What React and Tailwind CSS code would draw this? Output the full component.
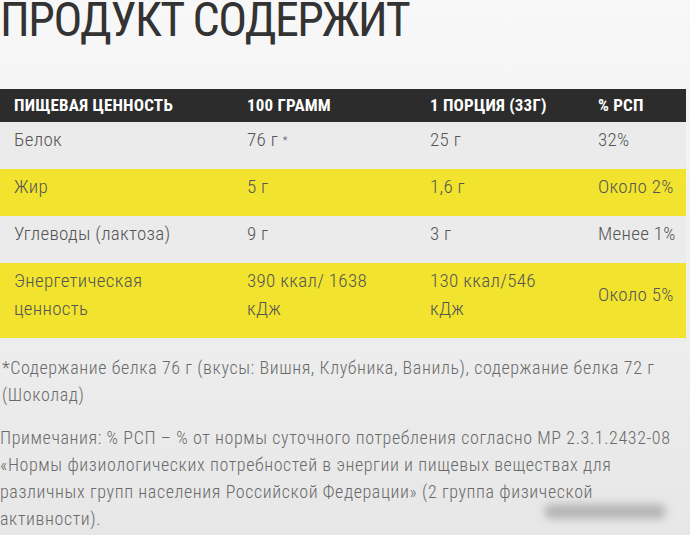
import React from "react";

const rows = [
  { bg: "bg-[#ebebeb]", c: ["Белок", <>76 г <sup className="text-[11px] relative -top-[2px]">*</sup></>, "25 г", "32%"] },
  { bg: "bg-[#f2e42e]", c: ["Жир", "5 г", "1,6 г", "Около 2%"] },
  { bg: "bg-[#ebebeb]", c: ["Углеводы (лактоза)", "9 г", "3 г", "Менее 1%"] },
  {
    bg: "bg-[#f2e42e]",
    c: [
      <>Энергетическая<br />ценность</>,
      <>390 ккал/ 1638<br />кДж</>,
      <>130 ккал/546<br />кДж</>,
      "Около 5%",
    ],
  },
];

export default function App() {
  return (
    <div className="relative w-[690px] h-[535px] overflow-hidden bg-gradient-to-b from-[#f8f8f8] to-[#e7e7e7] font-['Roboto',sans-serif] [font-stretch:75%]">
      <div className="h-[89px] flex flex-col">
        <h1 className="text-[48px] leading-[40px] text-[#333333] font-normal uppercase [font-stretch:75%] tracking-[-1.5px]">
          Продукт содержит
        </h1>
      </div>

      <div className="w-[686px]">
        <div className="grid grid-cols-[233px_183px_168px_1fr] pl-[14px] h-[33px] items-center bg-[#2c2c2c] text-white font-bold text-[17px] uppercase whitespace-nowrap tracking-[0.2px]">
          <div>Пищевая ценность</div>
          <div>100 грамм</div>
          <div>1 порция (33г)</div>
          <div>% РСП</div>
        </div>
        {rows.map((r, i) => (
          <div
            key={i}
            className={`grid grid-cols-[233px_183px_168px_1fr] pl-[14px] pt-[4px] pb-[15px] items-center text-[19px] leading-[28px] font-light text-[#555555] whitespace-nowrap tracking-[0.3px] ${r.bg}`}
          >
            {r.c.map((cell, j) => (
              <div key={j}>{cell}</div>
            ))}
          </div>
        ))}
      </div>

      <div className="mt-[16px] text-[18px] leading-[27px] font-light text-[#6a6a6a] whitespace-nowrap tracking-[0.6px]">
        <p className="pl-[2px]">
          *Содержание белка 76 г (вкусы: Вишня, Клубника, Ваниль), содержание белка 72 г
          <br />
          (Шоколад)
        </p>
        <p className="mt-[16px]">
          Примечания: % РСП – % от нормы суточного потребления согласно МР 2.3.1.2432-08
          <br />
          «Нормы физиологических потребностей в энергии и пищевых веществах для
          <br />
          различных групп населения Российской Федерации» (2 группа физической
          <br />
          активности).
        </p>
      </div>

      <div className="absolute left-[544px] top-[504px] w-[122px] h-[15px] rounded-full bg-[#a9a9a9] blur-[4px] opacity-80" />
    </div>
  );
}
